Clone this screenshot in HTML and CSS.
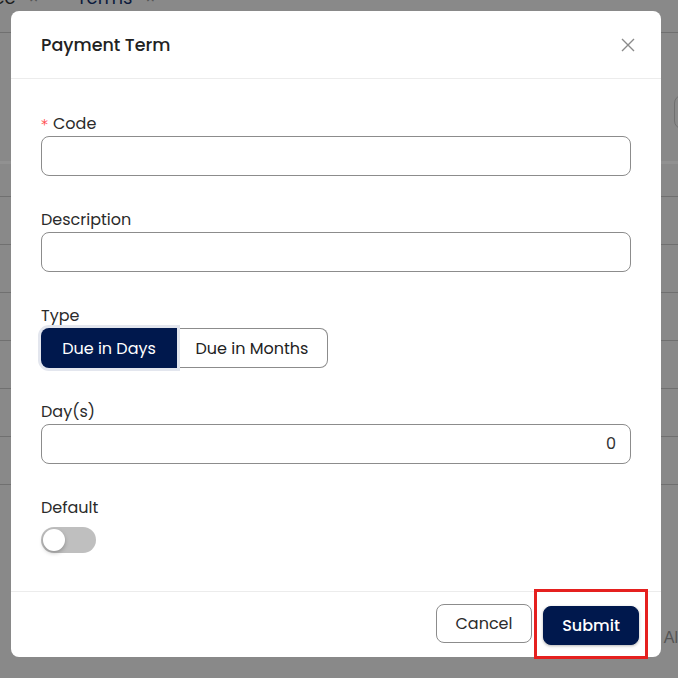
FILE: index.html
```html
<!DOCTYPE html>
<html>
<head>
<meta charset="utf-8">
<link rel="stylesheet" href="styles.css">
</head>
<body>
<div class="page">
  <div class="tabs">
    <span class="tab">Price <span class="tx">×</span></span>
    <span class="tab active">Terms <span class="tx">×</span></span>
  </div>
  <div class="toolbar"><span class="tool-btn"></span></div>
  <div class="thead"></div>
  <div class="row"></div>
  <div class="row"></div>
  <div class="row"></div>
  <div class="row"></div>
  <div class="row"></div>
  <div class="row"></div>
  <div class="pager"><span class="pg">Al</span></div>
</div>

<div class="mask">
  <div class="modal">
    <div class="modal-header">
      <span class="modal-title">Payment Term</span>
      <svg class="close" width="14" height="14" viewBox="0 0 14 14"><path d="M1 1L13 13M13 1L1 13" stroke="#8a8a8a" stroke-width="1.4" fill="none"/></svg>
    </div>
    <div class="modal-body">
      <div class="field">
        <label class="label"><span class="req">*</span>Code</label>
        <div class="input"></div>
      </div>
      <div class="field">
        <label class="label">Description</label>
        <div class="input"></div>
      </div>
      <div class="field">
        <label class="label">Type</label>
        <div class="segment">
          <span class="seg seg-on">Due in Days</span>
          <span class="seg seg-off">Due in Months</span>
        </div>
      </div>
      <div class="field">
        <label class="label">Day(s)</label>
        <div class="input num">0</div>
      </div>
      <div class="field last">
        <label class="label">Default</label>
        <span class="switch"><span class="knob"></span></span>
      </div>
    </div>
    <div class="modal-footer">
      <button class="btn btn-cancel">Cancel</button>
      <span class="highlight"><button class="btn btn-submit">Submit</button></span>
    </div>
  </div>
</div>
</body>
</html>
```
FILE: styles.css
```css
* { box-sizing: border-box; }
html, body { margin: 0; padding: 0; }
body {
  width: 678px;
  height: 678px;
  overflow: hidden;
  background: #898989;
  font-family: "Poppins", "Open Sans", "DejaVu Sans", sans-serif;
  color: #2b2b2b;
  position: relative;
}
.page { width: 678px; }
.tabs {
  height: 45px;
  border-bottom: 1px solid #707070;
  display: flex;
  gap: 38px;
  margin-top: -12px;
  margin-left: -28px;
  font-size: 18px;
  color: #1d1d1d;
}
.tab { line-height: 20px; }
.tab.active { color: #0c1a3c; }
.tx { color: #555; font-size: 16px; margin-left: 8px; }
.toolbar {
  height: 131px;
  display: flex;
  justify-content: flex-end;
  align-items: flex-start;
  padding-top: 62px;
  border-bottom: 3px solid #919191;
}
.tool-btn {
  width: 40px; height: 34px;
  margin-right: -36px;
  border: 1px solid #707070;
  border-radius: 8px;
}
.thead { height: 33px; border-bottom: 1px solid #707070; }
.row { height: 48px; border-bottom: 1px solid #707070; }
.pager { display: flex; justify-content: flex-end; padding-top: 144px; }
.pg { font-size: 16px; line-height: 18px; color: #555; margin-right: 0; font-family: "Liberation Sans", sans-serif; }

.mask {
  position: absolute;
  inset: 0;
  padding: 11px 17px 0 11px;
}
.modal {
  width: 650px;
  height: 646px;
  background: #fff;
  border-radius: 8px;
  display: flex;
  flex-direction: column;
}
.modal-header {
  height: 68px;
  border-bottom: 1px solid #ececec;
  display: flex;
  align-items: center;
  justify-content: space-between;
  padding: 0 26px 0 30px;
  flex-shrink: 0;
}
.modal-title { font-size: 17.5px; font-weight: 500; color: #222; }
.close { display: block; }
.modal-body {
  padding: 33px 30px 0 30px;
  flex: 1;
}
.field { display: flex; flex-direction: column; margin-bottom: 32px; }
.label {
  font-size: 16px;
  line-height: 24px;
  height: 24px;
  color: #2b2b2b;
}
.req { color: #ff4d4f; font-size: 14px; margin-right: 5px; font-family: "DejaVu Sans", sans-serif; }
.input {
  height: 40px;
  border: 1px solid #8c8c8c;
  border-radius: 8px;
  width: 590px;
}
.input.num {
  text-align: right;
  padding-right: 14px;
  line-height: 38px;
  font-size: 16px;
  color: #333;
}
.segment { display: flex; height: 40px; }
.seg {
  display: flex; align-items: center; justify-content: center;
  font-size: 16px;
  height: 40px;
}
.seg-on {
  width: 136px;
  background: #00184d;
  color: #fff;
  border-radius: 8px 0 0 8px;
  box-shadow: 0 0 0 3px #e3e6ee;
  position: relative;
}
.seg-off {
  width: 151px;
  border: 1px solid #8c8c8c;
  border-left: none;
  border-radius: 0 8px 8px 0;
  color: #222;
}
.field.last { margin-bottom: 0; }
.field.last .label { margin-bottom: 7px; }
.switch {
  width: 55px; height: 26px;
  border-radius: 13px;
  background: #bfbfbf;
  padding: 2px;
  display: flex;
}
.knob {
  width: 22px; height: 22px;
  border-radius: 50%;
  background: #fff;
  box-shadow: 0 2px 4px rgba(0,0,0,0.25);
}
.modal-footer {
  height: 66px;
  border-top: 1px solid #ececec;
  display: flex;
  justify-content: flex-end;
  align-items: center;
  padding-right: 13px;
  flex-shrink: 0;
}
.btn {
  width: 96px; height: 39px;
  border-radius: 8px;
  font-size: 16px;
  font-family: inherit;
  cursor: pointer;
}
.btn-cancel {
  background: #fff;
  border: 1px solid #8c8c8c;
  color: #2b2b2b;
  margin-right: 2px;
  margin-top: -2px;
}
.highlight {
  border: 3px solid #e5201f;
  padding: 14px 6px 11px 6px;
  margin-bottom: 1px;
  display: flex;
}
.btn-submit {
  background: #00184d;
  border: 1px solid #00184d;
  color: #fff;
  font-weight: 500;
  box-shadow: 0 1px 3px rgba(0,0,0,0.3);
}
```
